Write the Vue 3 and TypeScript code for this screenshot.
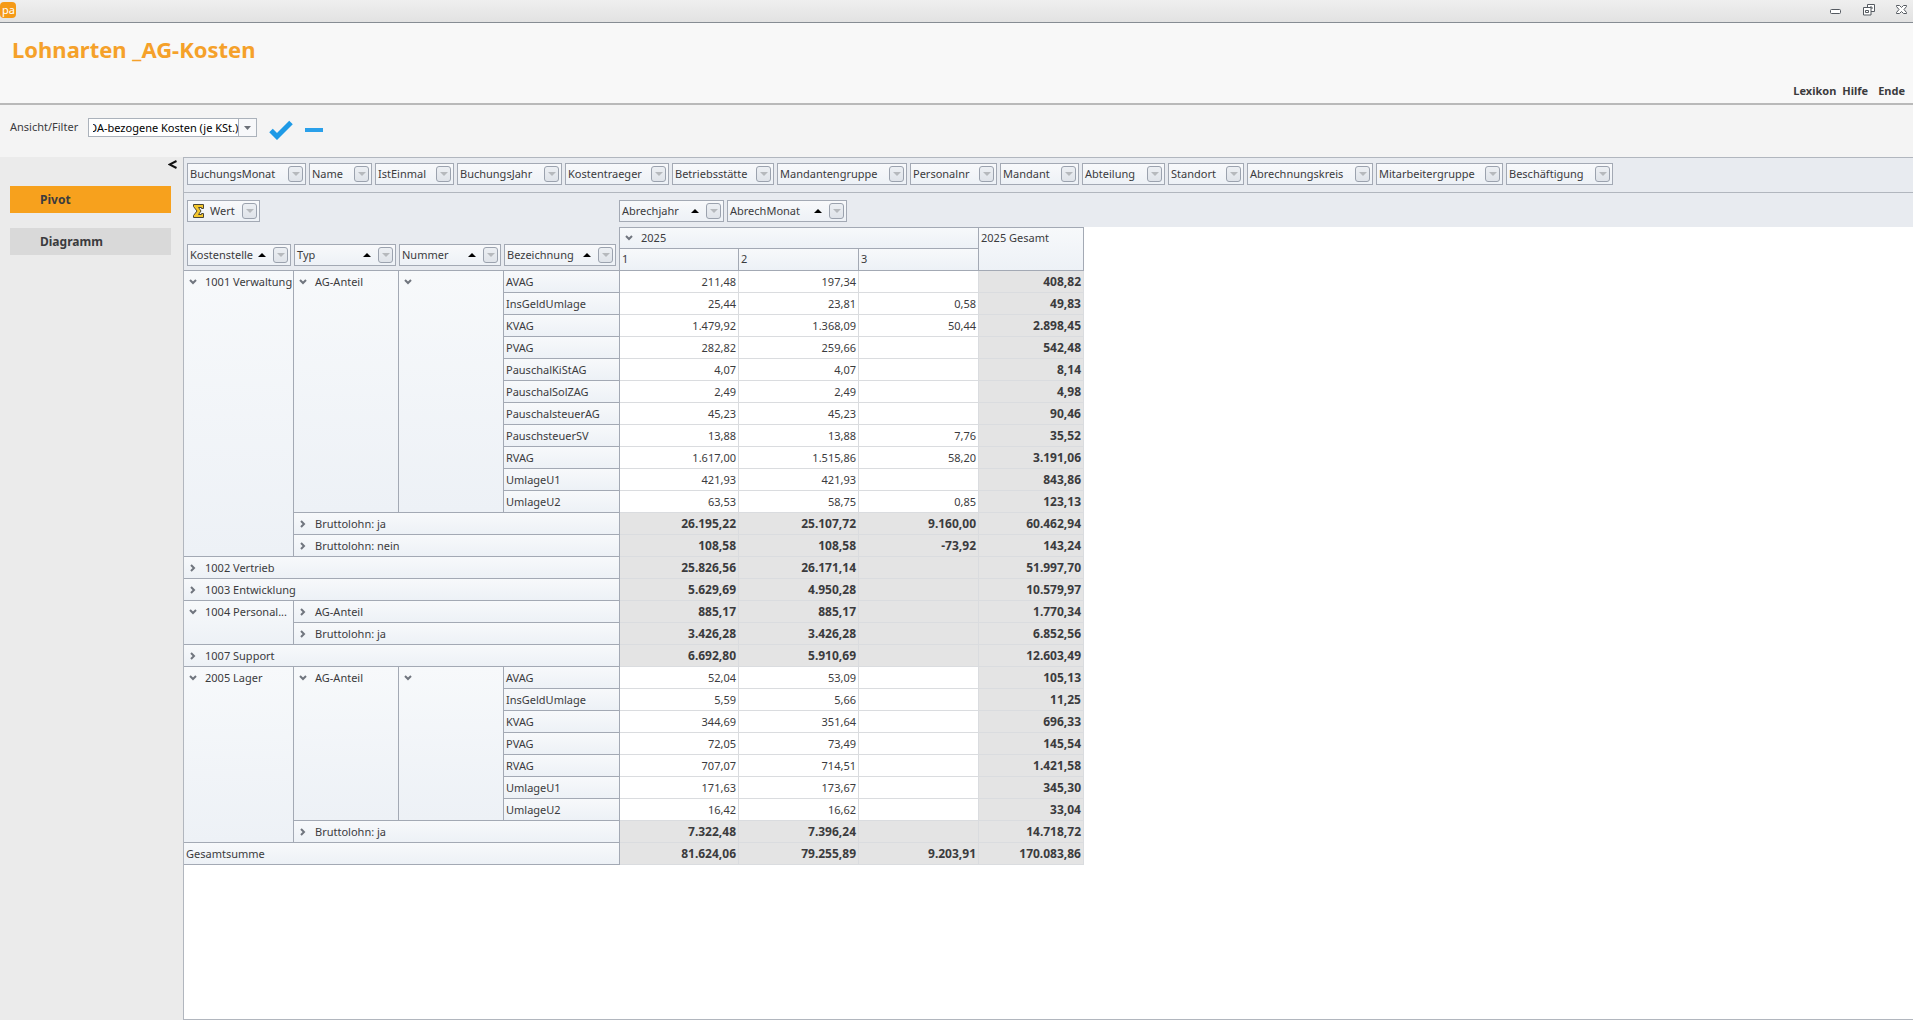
<script setup lang="ts">
import { onMounted, ref } from 'vue'

interface Field { label: string; width: number; sort?: boolean }
interface Head { text: string; state?: 'open' | 'closed'; rows?: number; cols?: number }
interface Row { heads: Head[]; values: string[]; total?: boolean }

const filterFields: Field[] = [
  { label: 'BuchungsMonat', width: 119 },
  { label: 'Name', width: 63 },
  { label: 'IstEinmal', width: 79 },
  { label: 'BuchungsJahr', width: 105 },
  { label: 'Kostentraeger', width: 104 },
  { label: 'Betriebsstätte', width: 102 },
  { label: 'Mandantengruppe', width: 130 },
  { label: 'Personalnr', width: 87 },
  { label: 'Mandant', width: 79 },
  { label: 'Abteilung', width: 83 },
  { label: 'Standort', width: 76 },
  { label: 'Abrechnungskreis', width: 126 },
  { label: 'Mitarbeitergruppe', width: 127 },
  { label: 'Beschäftigung', width: 107 },
]
const columnFields: Field[] = [
  { label: 'Abrechjahr', width: 105, sort: true },
  { label: 'AbrechMonat', width: 120, sort: true },
]
const rowFields: string[] = ['Kostenstelle', 'Typ', 'Nummer', 'Bezeichnung']
const columnWidths: number[] = [110, 105, 105, 116, 119, 120, 120, 105]

const leaf = (text: string, ...values: string[]): Row => ({ heads: [{ text }], values })
const sum = (heads: Head[], ...values: string[]): Row => ({ heads, values, total: true })

const rows: Row[] = [
  {
    heads: [
      { text: '1001 Verwaltung', state: 'open', rows: 13 },
      { text: 'AG-Anteil', state: 'open', rows: 11 },
      { text: '', state: 'open', rows: 11 },
      { text: 'AVAG' },
    ],
    values: ['211,48', '197,34', '', '408,82'],
  },
  leaf('InsGeldUmlage', '25,44', '23,81', '0,58', '49,83'),
  leaf('KVAG', '1.479,92', '1.368,09', '50,44', '2.898,45'),
  leaf('PVAG', '282,82', '259,66', '', '542,48'),
  leaf('PauschalKiStAG', '4,07', '4,07', '', '8,14'),
  leaf('PauschalSolZAG', '2,49', '2,49', '', '4,98'),
  leaf('PauschalsteuerAG', '45,23', '45,23', '', '90,46'),
  leaf('PauschsteuerSV', '13,88', '13,88', '7,76', '35,52'),
  leaf('RVAG', '1.617,00', '1.515,86', '58,20', '3.191,06'),
  leaf('UmlageU1', '421,93', '421,93', '', '843,86'),
  leaf('UmlageU2', '63,53', '58,75', '0,85', '123,13'),
  sum([{ text: 'Bruttolohn: ja', state: 'closed', cols: 3 }], '26.195,22', '25.107,72', '9.160,00', '60.462,94'),
  sum([{ text: 'Bruttolohn: nein', state: 'closed', cols: 3 }], '108,58', '108,58', '-73,92', '143,24'),
  sum([{ text: '1002 Vertrieb', state: 'closed', cols: 4 }], '25.826,56', '26.171,14', '', '51.997,70'),
  sum([{ text: '1003 Entwicklung', state: 'closed', cols: 4 }], '5.629,69', '4.950,28', '', '10.579,97'),
  sum(
    [
      { text: '1004 Personal...', state: 'open', rows: 2 },
      { text: 'AG-Anteil', state: 'closed', cols: 3 },
    ],
    '885,17', '885,17', '', '1.770,34',
  ),
  sum([{ text: 'Bruttolohn: ja', state: 'closed', cols: 3 }], '3.426,28', '3.426,28', '', '6.852,56'),
  sum([{ text: '1007 Support', state: 'closed', cols: 4 }], '6.692,80', '5.910,69', '', '12.603,49'),
  {
    heads: [
      { text: '2005 Lager', state: 'open', rows: 8 },
      { text: 'AG-Anteil', state: 'open', rows: 7 },
      { text: '', state: 'open', rows: 7 },
      { text: 'AVAG' },
    ],
    values: ['52,04', '53,09', '', '105,13'],
  },
  leaf('InsGeldUmlage', '5,59', '5,66', '', '11,25'),
  leaf('KVAG', '344,69', '351,64', '', '696,33'),
  leaf('PVAG', '72,05', '73,49', '', '145,54'),
  leaf('RVAG', '707,07', '714,51', '', '1.421,58'),
  leaf('UmlageU1', '171,63', '173,67', '', '345,30'),
  leaf('UmlageU2', '16,42', '16,62', '', '33,04'),
  sum([{ text: 'Bruttolohn: ja', state: 'closed', cols: 3 }], '7.322,48', '7.396,24', '', '14.718,72'),
  sum([{ text: 'Gesamtsumme', cols: 4 }], '81.624,06', '79.255,89', '9.203,91', '170.083,86'),
]

const view = ref('LOA-bezogene Kosten (je KSt.)')
const viewInput = ref<HTMLInputElement | null>(null)

onMounted(() => {
  if (viewInput.value) viewInput.value.scrollLeft = viewInput.value.scrollWidth
})
</script>

<template>
  <div class="window">
    <div class="titlebar">
      <span class="logo">pa</span>
      <div class="window-buttons">
        <button type="button" aria-label="Minimieren">
          <svg width="12" height="12" viewBox="0 0 12 12"><rect x="0.5" y="5.5" width="10" height="4" rx="1" fill="#fff" stroke="#555a61" /></svg>
        </button>
        <button type="button" aria-label="Wiederherstellen">
          <svg width="12" height="12" viewBox="0 0 12 12" fill="#fff" stroke="#555a61">
            <path d="M4.500.500h7v7h-4v-3h-3z" />
            <path d="M.500 3.500h7.500v7.500h-7.500z" /><path d="M2.500 6.500h3v2h-3z" /><path d="M7 3h2v2" fill="none" />
          </svg>
        </button>
        <button type="button" aria-label="Schließen">
          <svg width="12" height="12" viewBox="0 0 12 12" fill="#fff" stroke="#555a61">
            <path d="M.500 1.500h3l2 2 2-2h3v1l-2.500 3 2.500 3v1h-3l-2-2-2 2h-3v-1l2.500-3-2.500-3z" />
          </svg>
        </button>
      </div>
    </div>

    <header class="header">
      <h1>Lohnarten _AG-Kosten</h1>
      <nav class="menu">
        <a href="#lexikon">Lexikon</a>
        <a href="#hilfe">Hilfe</a>
        <a href="#ende" class="last">Ende</a>
      </nav>
    </header>

    <div class="viewbar">
      <label for="view">Ansicht/Filter</label>
      <div class="combo">
        <input id="view" ref="viewInput" v-model="view" type="text" />
        <button type="button" aria-label="Ansicht wählen">
          <svg width="7" height="4" viewBox="0 0 7 4"><path d="M0 0h7L3.500 4z" fill="#6b7078" /></svg>
        </button>
      </div>
      <button type="button" class="tool" aria-label="Übernehmen">
        <svg width="24" height="20" viewBox="0 0 24 20"><path d="M2 10.500l6 6L22 2.500" fill="none" stroke="#1e9ae6" stroke-width="5" /></svg>
      </button>
      <button type="button" class="tool" aria-label="Entfernen">
        <svg width="18" height="20" viewBox="0 0 18 20"><path d="M0 8h18v4H0z" fill="#2aa0ea" /></svg>
      </button>
    </div>

    <div class="body">
      <aside class="sidebar">
        <button type="button" class="collapse" aria-label="Leiste einklappen">
          <svg width="9" height="9" viewBox="0 0 9 9"><path d="M8.500 1L1.500 4.500 8.500 8" fill="none" stroke="#111" stroke-width="2" /></svg>
        </button>
        <button type="button" class="tab active">Pivot</button>
        <button type="button" class="tab">Diagramm</button>
      </aside>

      <main class="pivot">
        <div class="filter-area">
          <div v-for="f in filterFields" :key="f.label" class="chip" :style="{ width: f.width + 'px' }">
            <span>{{ f.label }}</span>
            <button type="button" class="drop" :aria-label="f.label + ' filtern'"></button>
          </div>
        </div>

        <div class="field-area">
          <div class="data-fields">
            <div class="chip value-chip">
              <svg class="sigma" width="11" height="14" viewBox="0 0 11 14">
                <path d="M.500.500h10v4h-2v-1H5.500L8 7 5.500 10.500H8.500v-1h2v4H.500v-2L4 7 .500 2.500z" fill="#f3c62d" stroke="#4a4637" />
              </svg>
              <span>Wert</span>
              <button type="button" class="drop" aria-label="Wert filtern"></button>
            </div>
          </div>
          <div v-for="f in columnFields" :key="f.label" class="chip" :style="{ width: f.width + 'px' }">
            <span>{{ f.label }}</span>
            <i class="sort"></i>
            <button type="button" class="drop" :aria-label="f.label + ' filtern'"></button>
          </div>
        </div>

        <table>
          <colgroup>
            <col v-for="(w, i) in columnWidths" :key="i" :style="{ width: w + 'px' }" />
          </colgroup>
          <thead>
            <tr>
              <th v-for="f in rowFields" :key="f" rowspan="2" class="corner">
                <div class="chip">
                  <span>{{ f }}</span>
                  <i class="sort"></i>
                  <button type="button" class="drop" :aria-label="f + ' filtern'"></button>
                </div>
              </th>
              <th colspan="3" class="head top">
                <div class="node">
                  <svg class="chevron" width="8" height="8" viewBox="0 0 8 8"><path d="M1 2l3 3 3-3" /></svg>
                  <span>2025</span>
                </div>
              </th>
              <th rowspan="2" class="head top">2025 Gesamt</th>
            </tr>
            <tr>
              <th class="head">1</th>
              <th class="head">2</th>
              <th class="head">3</th>
            </tr>
          </thead>
          <tbody>
            <tr v-for="(row, r) in rows" :key="r" :class="{ total: row.total }">
              <th v-for="(h, i) in row.heads" :key="i" class="head" :rowspan="h.rows ?? 1" :colspan="h.cols ?? 1">
                <div v-if="h.state" class="node">
                  <svg class="chevron" width="8" height="8" viewBox="0 0 8 8">
                    <path :d="h.state === 'open' ? 'M1 2l3 3 3-3' : 'M2 1l3 3-3 3'" />
                  </svg>
                  <span>{{ h.text }}</span>
                </div>
                <template v-else>{{ h.text }}</template>
              </th>
              <td v-for="(v, i) in row.values" :key="'v' + i">{{ v }}</td>
            </tr>
          </tbody>
        </table>
      </main>
    </div>
  </div>
</template>

<style>
body {
  margin: 0;
}
</style>

<style scoped>
.window {
  display: flex;
  flex-direction: column;
  min-height: 100vh;
  background: #f4f4f4;
  color: #3b3b3d;
  font-family: "Noto Sans", "Open Sans", sans-serif;
  font-size: 11px;
  line-height: 20px;
}
.window * {
  box-sizing: border-box;
}
button {
  padding: 0;
  border: 0;
  background: none;
  color: inherit;
  font: inherit;
}
svg {
  display: block;
}

/* Title bar */
.titlebar {
  display: flex;
  justify-content: space-between;
  align-items: flex-start;
  height: 23px;
  border-bottom: 1px solid #868c93;
  background: linear-gradient(#efefef, #e2e2e2);
}
.logo {
  width: 16px;
  height: 16px;
  margin-top: 2px;
  padding-left: 2px;
  border-radius: 4px;
  background: #f59a17;
  color: #fff;
  line-height: 15px;
}
.window-buttons {
  display: flex;
  gap: 21px;
  padding: 4px 5px 0 0;
}

/* Page header */
.header {
  display: flex;
  justify-content: space-between;
  height: 82px;
  padding: 0 8px 0 12px;
  border-bottom: 2px solid #b9b9b9;
  background: #f8f8f8;
}
h1 {
  margin: 10px 0 0;
  color: #f5a12a;
  font-size: 22px;
  font-weight: 700;
  line-height: 32px;
}
.menu {
  display: flex;
  align-items: flex-end;
  gap: 6px;
  padding-bottom: 2px;
  font-weight: 700;
}
.menu a {
  color: #3b3b3d;
  text-decoration: none;
}
.menu .last {
  margin-left: 4px;
}

/* View selection */
.viewbar {
  display: flex;
  align-items: flex-start;
  height: 52px;
  padding: 12px 10px 0;
}
.viewbar label {
  width: 78px;
}
.combo {
  display: flex;
  width: 169px;
  height: 19px;
  margin-top: 1px;
  padding-left: 4px;
  border: 1px solid #abb2bb;
  background: #fff;
}
.combo input {
  flex: 1;
  min-width: 0;
  padding: 0;
  border: 0;
  outline: 0;
  background: none;
  color: #000;
  font: inherit;
  line-height: 17px;
}
.combo button {
  display: flex;
  align-items: center;
  justify-content: center;
  width: 18px;
  border-left: 1px solid #abb2bb;
  background: #f7f8fa;
}
.tool {
  margin: 3px 0 0 12px;
}

/* Sidebar */
.body {
  display: flex;
  flex: 1;
}
.sidebar {
  display: flex;
  flex-direction: column;
  width: 183px;
  padding: 0 12px 0 10px;
  background: #ebebeb;
}
.collapse {
  align-self: flex-end;
  margin: 3px -6px 17px 0;
}
.tab {
  height: 27px;
  margin-bottom: 15px;
  padding-left: 30px;
  background: #d9d9d9;
  font-size: 12px;
  font-weight: 700;
  text-align: left;
}
.tab.active {
  background: #f7a11d;
}

/* Pivot grid */
.pivot {
  flex: 1;
  min-width: 0;
  border: solid #b1b6be;
  border-width: 1px 0 1px 1px;
  background: #fff;
}
.filter-area {
  display: flex;
  gap: 3px;
  height: 35px;
  padding: 5px 3px 0;
  border-bottom: 1px solid #b1b6be;
  background: #e8ebf0;
}
.field-area {
  display: flex;
  gap: 3px;
  height: 34px;
  padding: 7px 3px 0;
  background: #e8ebf0;
}
.data-fields {
  width: 429px;
}
.chip {
  display: flex;
  align-items: center;
  height: 22px;
  padding: 0 2px;
  border: 1px solid #a3a9b4;
  background: linear-gradient(#f8f9fb, #edf1f6);
  white-space: nowrap;
}
.chip span {
  flex: 1;
  min-width: 0;
}
.value-chip {
  width: 73px;
}
.sigma {
  margin: 0 6px 0 3px;
}
.sort {
  margin-right: 7px;
  border: solid transparent;
  border-width: 0 4px 4px;
  border-bottom-color: #000;
}
.drop {
  display: flex;
  align-items: center;
  justify-content: center;
  width: 15px;
  height: 16px;
  border: 1px solid #9ba2ae;
  border-radius: 3px;
  background: linear-gradient(#eceff3, #dfe3e9);
}
.drop::before {
  content: "";
  border: solid transparent;
  border-width: 4px 4px 0;
  border-top-color: #b6b9bd;
}
table {
  width: 900px;
  border-spacing: 0;
  table-layout: fixed;
}
th,
td {
  height: 22px;
  padding: 0 2px;
  font-weight: 400;
  line-height: 20px;
  text-align: left;
  vertical-align: top;
  white-space: nowrap;
}
tbody th,
tbody td {
  padding-top: 1px;
}
.corner {
  padding: 17px 3px 4px 0;
  border-bottom: 1px solid #a3a9b4;
  background: #e8ebf0;
}
.corner:first-child {
  padding-left: 3px;
}
.corner:nth-child(4) {
  border-right: 1px solid #a3a9b4;
}
.head {
  overflow: hidden;
  border: solid #a3a9b4;
  border-width: 0 1px 1px 0;
  background: linear-gradient(#f7f9fb, #edf1f6);
}
.top {
  border-top-width: 1px;
}
.node {
  display: flex;
  align-items: center;
  gap: 8px;
  min-height: 20px;
  padding-left: 3px;
}
.chevron {
  flex: none;
  fill: none;
  stroke: #70757e;
  stroke-width: 2;
}
td {
  border: solid #dadcdf;
  border-width: 0 1px 1px 0;
  text-align: right;
}
td:last-child,
.total td {
  background: #e4e4e4;
  font-size: 12px;
  font-weight: 700;
}
</style>
